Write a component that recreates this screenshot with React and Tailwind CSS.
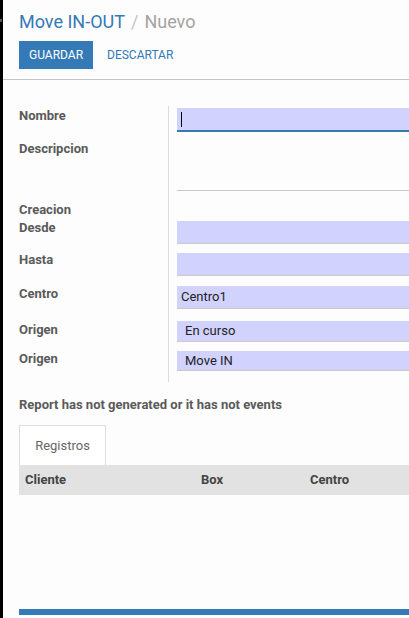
import React from "react";

const font = { fontFamily: "Roboto, 'Liberation Sans', sans-serif" };

function Label({ children, className = "" }) {
  return (
    <div className={`text-[13px] leading-[18px] font-bold text-[#5a5a5a] ${className}`}>
      {children}
    </div>
  );
}

function Field({ children, className = "" }) {
  return (
    <div
      className={`bg-[#d2d2ff] border-b border-[#c9c9c9] flex items-center text-[13px] text-[#222] ${className}`}
    >
      {children}
    </div>
  );
}

export default function App() {
  return (
    <div className="flex min-h-[618px] w-[409px] overflow-hidden bg-[#fdfdfd]" style={font}>
      {/* dark edge of the neighbouring pane */}
      <div className="w-[3px] shrink-0 bg-black relative">
        <div className="absolute left-0 top-[19px] h-[3px] w-[2px] bg-[#555]" />
      </div>

      <div className="flex-1 min-w-0 flex flex-col">
        {/* control panel */}
        <div className="pl-[16px] pt-[11px] pb-[10px] border-b border-[#c4c4c4]">
          <div className="text-[18px] leading-[22px] whitespace-nowrap">
            <span className="text-[#337ab7]">Move IN-OUT</span>
            <span className="text-[#c4c4c4] mx-[6px]">/</span>
            <span className="text-[#a3a3a3]">Nuevo</span>
          </div>
          <div className="mt-[8px] flex items-center gap-[4px]">
            <button className="h-[28px] px-[10px] bg-[#337ab7] text-white text-[12px] uppercase">
              Guardar
            </button>
            <button className="h-[28px] px-[10px] text-[#337ab7] text-[12px] uppercase">
              Descartar
            </button>
          </div>
        </div>

        {/* form sheet */}
        <div className="pl-[16px] pt-[26px]">
          <div className="grid grid-cols-[149px_1fr]">
            {/* Nombre */}
            <div className="h-[33px]">
              <Label className="pt-[1px]">Nombre</Label>
            </div>
            <div className="h-[33px] border-l border-[#dcdcdc] pl-[8px] pt-[2px]">
              <div className="h-[24px] bg-[#d2d2ff] border-b-2 border-[#337ab7] flex items-center pl-[4px]">
                <span className="w-px h-[15px] bg-black" />
              </div>
            </div>

            {/* Descripcion */}
            <div className="h-[58px]">
              <Label className="pt-[1px]">Descripcion</Label>
            </div>
            <div className="h-[58px] border-l border-[#dcdcdc] pl-[8px]">
              <div className="h-[52px] border-b border-[#c9c9c9]" />
            </div>

            {/* Creacion Desde */}
            <div className="h-[51px]">
              <Label className="pt-[4px]">
                Creacion
                <br />
                Desde
              </Label>
            </div>
            <div className="h-[51px] border-l border-[#dcdcdc] pl-[8px] pt-[24px]">
              <Field className="h-[23px]" />
            </div>

            {/* Hasta */}
            <div className="h-[33px]">
              <Label className="pt-[3px]">Hasta</Label>
            </div>
            <div className="h-[33px] border-l border-[#dcdcdc] pl-[8px] pt-[5px]">
              <Field className="h-[23px]" />
            </div>

            {/* Centro */}
            <div className="h-[35px]">
              <Label className="pt-[4px]">Centro</Label>
            </div>
            <div className="h-[35px] border-l border-[#dcdcdc] pl-[8px] pt-[5px]">
              <Field className="h-[23px] pl-[4px]">Centro1</Field>
            </div>

            {/* Origen (estado) */}
            <div className="h-[30px]">
              <Label className="pt-[5px]">Origen</Label>
            </div>
            <div className="h-[30px] border-l border-[#dcdcdc] pl-[8px] pt-[5px]">
              <Field className="h-[21px] pl-[8px]">En curso</Field>
            </div>

            {/* Origen (tipo) */}
            <div className="h-[36px]">
              <Label className="pt-[4px]">Origen</Label>
            </div>
            <div className="h-[36px] border-l border-[#dcdcdc] pl-[8px] pt-[5px]">
              <Field className="h-[20px] pl-[8px]">Move IN</Field>
            </div>
          </div>

          <Label className="mt-[14px] whitespace-nowrap">
            Report has not generated or it has not events
          </Label>

          {/* notebook */}
          <div className="mt-[11px] flex">
            <div className="w-[87px] h-[40px] border border-b-0 border-[#dcdcdc] bg-white flex items-center justify-center text-[13px] text-[#666]">
              Registros
            </div>
          </div>
          <div className="h-[30px] bg-[#e2e2e2] grid grid-cols-[176px_109px_1fr] items-center text-[13px] leading-[18px] font-bold text-[#444]">
            <div className="pl-[6px]">Cliente</div>
            <div className="pl-[6px]">Box</div>
            <div className="pl-[6px]">Centro</div>
          </div>
          <div className="h-[114px]" />
          <div className="h-[6px] bg-[#337ab7]" />
        </div>
      </div>
    </div>
  );
}
